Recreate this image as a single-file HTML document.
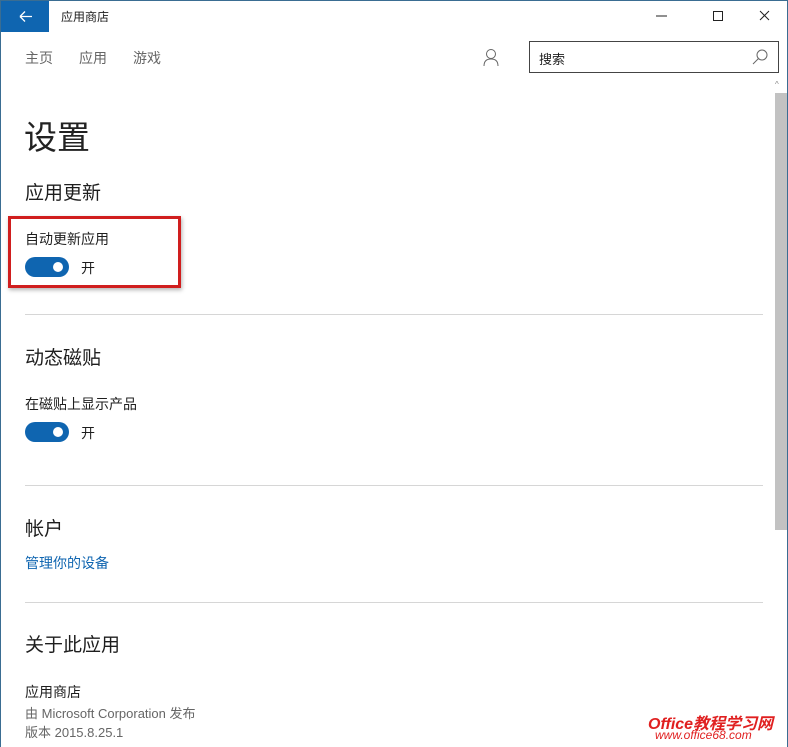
<!DOCTYPE html>
<html><head><meta charset="utf-8"><style>
*{margin:0;padding:0;box-sizing:border-box}
body{width:788px;height:747px;overflow:hidden;background:#fff;font-family:"Liberation Sans","Noto Sans CJK SC",sans-serif;color:#1e1e1e;position:relative}
.frame{position:absolute;inset:0;border:1px solid #3a6d92;border-bottom:none}
.a{position:absolute;white-space:nowrap}
.back{position:absolute;left:1px;top:1px;width:48px;height:31px;background:#0f65b0}
.tog{position:absolute;width:44px;height:20px;border-radius:10px;background:#0f65b0}
.tog:after{content:"";position:absolute;right:6px;top:5px;width:10px;height:10px;border-radius:50%;background:#fff}
.hr{position:absolute;left:25px;width:738px;height:1px;background:#d6d6d6}
</style></head><body>
<div class="frame"></div>
<div class="back"><svg width="48" height="31"><path d="M19 15.5h12M19 15.5l5-5M19 15.5l5 5" stroke="#fff" stroke-width="1.3" fill="none"/></svg></div>
<div class="a" style="left:61px;top:8px;font-size:12px">应用商店</div>
<svg class="a" style="left:650px;top:8px" width="130" height="16"><path d="M6 8h11" stroke="#222"/><rect x="63.5" y="3.5" width="9" height="9" fill="none" stroke="#222"/><path d="M110 3l9 9M119 3l-9 9" stroke="#222"/></svg>
<div class="a" style="left:25px;top:48px;font-size:14px;color:#666">主页</div>
<div class="a" style="left:79px;top:48px;font-size:14px;color:#666">应用</div>
<div class="a" style="left:133px;top:48px;font-size:14px;color:#666">游戏</div>
<svg class="a" style="left:482px;top:48px" width="18" height="20"><circle cx="9" cy="6" r="4.5" fill="none" stroke="#666"/><path d="M2 18c0-5 3-7 7-7s7 2 7 7" fill="none" stroke="#666"/></svg>
<div class="a" style="left:529px;top:41px;width:250px;height:32px;border:1px solid #444"></div>
<div class="a" style="left:539px;top:49px;font-size:13px">搜索</div>
<svg class="a" style="left:751px;top:48px" width="18" height="18"><circle cx="11" cy="7" r="5" fill="none" stroke="#666"/><path d="M7.5 10.5L2 16" stroke="#666"/></svg>
<div class="a" style="left:775px;top:80px;width:12px;height:10px;font-size:8px;color:#888">^</div>
<div class="a" style="left:775px;top:93px;width:12px;height:437px;background:#c2c2c2"></div>
<div class="a" style="left:24px;top:111px;font-size:33px;color:#222">设置</div>
<div class="a" style="left:25px;top:178px;font-size:19px">应用更新</div>
<div class="a" style="left:25px;top:229px;font-size:14px">自动更新应用</div>
<div class="tog" style="left:25px;top:257px"></div>
<div class="a" style="left:81px;top:258px;font-size:14px">开</div>
<div class="a" style="left:8px;top:216px;width:173px;height:72px;border:3px solid #d01e1e;box-shadow:1px 2px 4px rgba(0,0,0,.3)"></div>
<div class="hr" style="top:314px"></div>
<div class="a" style="left:25px;top:343px;font-size:19px">动态磁贴</div>
<div class="a" style="left:25px;top:394px;font-size:14px">在磁贴上显示产品</div>
<div class="tog" style="left:25px;top:422px"></div>
<div class="a" style="left:81px;top:423px;font-size:14px">开</div>
<div class="hr" style="top:485px"></div>
<div class="a" style="left:25px;top:514px;font-size:19px">帐户</div>
<div class="a" style="left:25px;top:553px;font-size:14px;color:#0f65b0">管理你的设备</div>
<div class="hr" style="top:602px"></div>
<div class="a" style="left:25px;top:630px;font-size:19px">关于此应用</div>
<div class="a" style="left:25px;top:682px;font-size:14px">应用商店</div>
<div class="a" style="left:25px;top:703px;font-size:13px;color:#666">由 Microsoft Corporation 发布</div>
<div class="a" style="left:25px;top:722px;font-size:13px;color:#666">版本 2015.8.25.1</div>
<div class="a" style="left:648px;top:710px;font-size:16px;font-weight:bold;font-style:italic;color:#e02020">Office教程学习网</div>
<div class="a" style="left:655px;top:728px;font-size:12px;font-style:italic;color:#e02020">www.office68.com</div>
</body></html>
